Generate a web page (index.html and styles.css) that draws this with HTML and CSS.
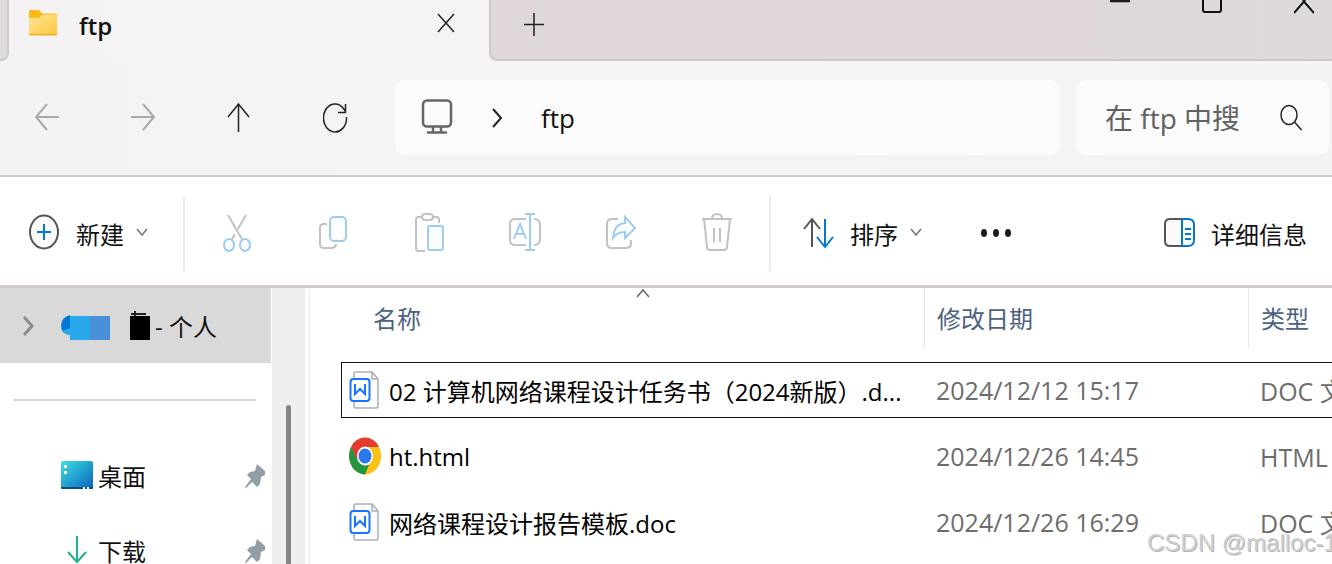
FILE: index.html
```html
<!DOCTYPE html>
<html lang="zh-CN">
<head>
  <meta charset="UTF-8" />
  <meta name="viewport" content="width=device-width, initial-scale=1.0"/>
  <title>ftp</title>
  <link rel="stylesheet" href="styles.css">
</head>
<body>

  <!-- Title bar -->
  <header class="titlebar">
    <div class="strip-left"></div>
    <div class="tab">
      <svg class="tab-icon" width="30" height="30" viewBox="0 0 30 30">
        <defs>
          <linearGradient id="folder" x1="0" y1="0" x2="1" y2="1">
            <stop offset="0" stop-color="#ffe59a"/>
            <stop offset="1" stop-color="#ffc83a"/>
          </linearGradient>
        </defs>
        <path d="M1 3q0-1 1-1h8q1.500 0 2.500 1.500L14 5.500h14q1 0 1 1V15H1z" fill="#fbb917"/>
        <path d="M1 10h9q1.500 0 3-2l1.500-1.500H29V26q0 1.500-1 1.500H2q-1 0-1-1.500z" fill="url(#folder)"/>
        <path d="M1 26.500h28" stroke="#eeb233" stroke-width="1.500"/>
      </svg>
      <span class="tab-title">ftp</span>
      <button class="icon-btn tab-close" aria-label="关闭标签页">
        <svg width="20" height="22" viewBox="0 0 20 22"><path d="M2 2l16 18M18 2L2 20" class="line"/></svg>
      </button>
    </div>
    <div class="strip">
      <button class="icon-btn new-tab" aria-label="新建标签页">
        <svg width="22" height="24" viewBox="0 0 22 24"><path d="M1 12.500h20M11 1v23" class="line"/></svg>
      </button>
      <div class="window-buttons">
        <button class="icon-btn" aria-label="最小化">
          <svg width="20" height="14" viewBox="0 0 20 14"><path d="M0 1h20" stroke="#1b1b1b" stroke-width="2.500"/></svg>
        </button>
        <button class="icon-btn" aria-label="最大化">
          <svg width="20" height="14" viewBox="0 0 20 14"><path d="M1 0v10q0 2 2 2h14q2 0 2-2V0" fill="none" stroke="#111" stroke-width="2"/></svg>
        </button>
        <button class="icon-btn" aria-label="关闭">
          <svg width="20" height="14" viewBox="0 0 20 14"><path d="M0 13L10 1.500 20 13M9 0l1 1.500L11 0" fill="none" stroke="#111" stroke-width="2"/></svg>
        </button>
      </div>
    </div>
  </header>

  <!-- Navigation and address -->
  <nav class="navbar">
    <div class="nav-buttons">
      <button class="icon-btn" aria-label="后退" disabled>
        <svg width="26" height="30" viewBox="0 0 26 30"><path d="M24 14H1M12 1L1 14l11 13" class="line muted"/></svg>
      </button>
      <button class="icon-btn" aria-label="前进" disabled>
        <svg width="26" height="30" viewBox="0 0 26 30"><path d="M0 14h23M12 1l11 13-11 13" class="line muted"/></svg>
      </button>
      <button class="icon-btn" aria-label="向上">
        <svg width="26" height="30" viewBox="0 0 26 30"><path d="M11.500 29V1M1 14L11.500 1 22 14" class="line"/></svg>
      </button>
      <button class="icon-btn" aria-label="刷新">
        <svg width="26" height="30" viewBox="0 0 26 30"><path d="M23.500 14a11.500 14 0 1 1-3-8.500l2 3M22.500 1v8.500H15" class="line"/></svg>
      </button>
    </div>
    <div class="address">
      <svg width="32" height="38" viewBox="0 0 32 38">
        <rect x="2" y="1.500" width="28" height="26" rx="4" fill="none" stroke="#666" stroke-width="2.500"/>
        <path d="M12 28v5M20 28v5M7 33.500h18" fill="none" stroke="#666" stroke-width="2.500" stroke-linecap="round"/>
      </svg>
      <svg width="12" height="22" viewBox="0 0 12 22"><path d="M1 2l8 9-8 9" fill="none" stroke="#222" stroke-width="2"/></svg>
      <a href="#">ftp</a>
    </div>
    <label class="search">
      <input type="text" placeholder="在 ftp 中搜" aria-label="在 ftp 中搜索">
      <svg width="24" height="28" viewBox="0 0 24 28">
        <ellipse cx="9" cy="11" rx="8" ry="9.500" class="line"/>
        <path d="M14.500 18l7 8" class="line"/>
      </svg>
    </label>
  </nav>

  <!-- Command bar -->
  <div class="toolbar">
    <button class="text-btn new-btn">
      <svg width="32" height="38" viewBox="0 0 32 38">
        <ellipse cx="16" cy="18" rx="14" ry="16.500" fill="#fafafa" stroke="#555" stroke-width="2"/>
        <path d="M9 18h14M16 10v16" stroke="#0078d4" stroke-width="2"/>
      </svg>
      <span>新建</span>
      <svg class="chevron" width="12" height="10" viewBox="0 0 12 10"><path d="M1 1l5 6 5-6"/></svg>
    </button>
    <div class="actions">
      <button class="icon-btn" aria-label="剪切" disabled>
        <svg width="32" height="42" viewBox="0 0 32 42">
          <path d="M7 3l15 26M25 3l-8 14M14 22l-4 7" class="gray"/>
          <ellipse cx="8" cy="33" rx="5" ry="6" class="blue"/>
          <ellipse cx="24" cy="33" rx="5" ry="6" class="blue"/>
        </svg>
      </button>
      <button class="icon-btn" aria-label="复制" disabled>
        <svg width="32" height="42" viewBox="0 0 32 42">
          <path d="M10 12H7q-4 0-4 4v16q0 4 4 4h7q5 0 5-4" class="gray"/>
          <rect x="13" y="5" width="16" height="24" rx="4" class="blue"/>
        </svg>
      </button>
      <button class="icon-btn" aria-label="粘贴" disabled>
        <svg width="32" height="42" viewBox="0 0 32 42">
          <path d="M9 5H5Q3 5 3 8v28q0 3 2 3h7M20 5h4q2 0 2 3v3" class="gray"/>
          <rect x="9" y="2" width="11" height="6" rx="3" class="gray"/>
          <rect x="15" y="14" width="15" height="24" rx="2" class="blue"/>
        </svg>
      </button>
      <button class="icon-btn" aria-label="重命名" disabled>
        <svg width="32" height="42" viewBox="0 0 32 42">
          <path d="M17 7H6q-5 0-5 5v16q0 5 5 5h11M25 7q6 0 6 6v14q0 6-6 6" class="gray"/>
          <path d="M5 27l6-15 6 15M7 22h8M21 2v36M16 2h10M16 38h10" class="blue"/>
        </svg>
      </button>
      <button class="icon-btn" aria-label="共享" disabled>
        <svg width="32" height="42" viewBox="0 0 32 42">
          <path d="M13 7H7q-5 0-5 5v19q0 5 5 5h14q5 0 5-5v-3" class="gray"/>
          <path d="M20 5l10 11-10 10v-6q-8 0-12 6Q9 12 20 11z" class="blue"/>
        </svg>
      </button>
      <button class="icon-btn" aria-label="删除" disabled>
        <svg width="32" height="42" viewBox="0 0 32 42">
          <path d="M1 7h30M11 7q0-5 5-5t5 5M3 7l3 28q0 3 3 3h14q3 0 3-3l3-28M13 16v14M19 16v14" class="gray"/>
        </svg>
      </button>
    </div>
    <button class="text-btn sort-btn">
      <svg width="32" height="32" viewBox="0 0 32 32">
        <path d="M10 30V2M2 12l8-10 8 10" fill="none" stroke="#555" stroke-width="2"/>
        <path d="M23 2v28M15 20l8 10 8-10" fill="none" stroke="#0078d4" stroke-width="2"/>
      </svg>
      <span>排序</span>
      <svg class="chevron" width="12" height="10" viewBox="0 0 12 10"><path d="M1 1l5 6 5-6"/></svg>
    </button>
    <button class="icon-btn more-btn" aria-label="更多">
      <svg width="34" height="10" viewBox="0 0 34 10">
        <g fill="#1b1b1b"><ellipse cx="4" cy="5" rx="3" ry="4"/><ellipse cx="16" cy="5" rx="3" ry="4"/><ellipse cx="28" cy="5" rx="3" ry="4"/></g>
      </svg>
    </button>
    <button class="text-btn details-btn">
      <svg width="32" height="32" viewBox="0 0 32 32">
        <path d="M19 2H7Q2 2 2 7v17q0 5 5 5h12" fill="#fafafa" stroke="#555" stroke-width="2"/>
        <path d="M19 2h6q6 0 6 6v15q0 6-6 6h-6zM22 12h6M22 17h6M22 22h6" fill="none" stroke="#0078d4" stroke-width="2"/>
      </svg>
      <span>详细信息</span>
    </button>
  </div>

  <main class="content">
    <aside class="sidebar">
      <a class="side-item account" href="#">
        <svg class="expand" width="12" height="22" viewBox="0 0 12 22"><path d="M2 2l8 9-8 9" fill="none" stroke="#8a8a8a" stroke-width="3"/></svg>
        <svg class="cloud" width="50" height="30" viewBox="0 0 50 30">
          <path d="M9 4v20Q0 23 0 14 1 6 9 4z" fill="#0078d4"/>
          <path d="M9 17v7q-5 0-8-4z" fill="#29a8ea"/>
          <rect x="9" y="5" width="20" height="24" fill="#29a8ea"/>
          <rect x="29" y="5" width="20" height="24" fill="#4a90d9"/>
        </svg>
        <svg width="22" height="34" viewBox="0 0 22 34">
          <path d="M1 5h15M5 2v6" stroke="#222" stroke-width="2"/>
          <rect x="0" y="7" width="20" height="24" fill="#000"/>
        </svg>
        <span class="account-name">- 个人</span>
      </a>
      <hr>
      <a class="side-item pinned" href="#">
        <svg width="34" height="30" viewBox="0 0 34 30">
          <defs>
            <linearGradient id="desk" x1="0" y1="0" x2="1" y2="1">
              <stop offset="0" stop-color="#3de0e4"/>
              <stop offset="1" stop-color="#0b62bd"/>
            </linearGradient>
          </defs>
          <rect x="1" y="0" width="32" height="28" rx="2" fill="url(#desk)"/>
          <path d="M1 26h32v1q0 1-1 1H2q-1 0-1-1z" fill="#0b4f80"/>
          <path d="M4 4h3v3H4zM4 10h3v3H4zM23 26h2v2h-2zM27 26h2v2h-2z" fill="#fff"/>
        </svg>
        <span>桌面</span>
        <svg class="pin" width="22" height="26" viewBox="0 0 22 26">
          <path d="M13 1l8 7v4l-4 2-1 7-3 3-5-5-6 6-1-1 6-8-4-4 3-3 5-1z" fill="#929ea6"/>
        </svg>
      </a>
      <a class="side-item pinned" href="#">
        <svg width="34" height="30" viewBox="0 0 34 30">
          <path d="M17 0v26M8 16l9 10 9-10" fill="none" stroke="#23b08c" stroke-width="2"/>
        </svg>
        <span>下载</span>
        <svg class="pin" width="22" height="26" viewBox="0 0 22 26">
          <path d="M13 1l8 7v4l-4 2-1 7-3 3-5-5-6 6-1-1 6-8-4-4 3-3 5-1z" fill="#929ea6"/>
        </svg>
      </a>
    </aside>
    <div class="scrollbar"><div class="thumb"></div></div>

    <section class="files">
      <table>
        <thead>
          <tr>
            <th class="col-name">
              <div class="head">名称
                <svg class="sort-mark" width="14" height="10" viewBox="0 0 14 10"><path d="M1 9l6-7 6 7" fill="none" stroke="#666" stroke-width="1.500"/></svg>
              </div>
            </th>
            <th class="col-date"><div class="head">修改日期</div></th>
            <th class="col-type"><div class="head">类型</div></th>
          </tr>
        </thead>
        <tbody>
          <tr class="focused">
            <td>
              <div class="cell name">
                <svg width="32" height="40" viewBox="0 0 32 40">
                  <path d="M5 8V3q0-1 2-1h16l6 7v27q0 2-2 2H7q-2 0-2-2v-4" fill="#fcfcfd" stroke="#a9afba" stroke-width="1.500"/>
                  <path d="M23 2v7h6" fill="none" stroke="#a9afba" stroke-width="1.500"/>
                  <rect x="1.500" y="9" width="19" height="22" rx="3" fill="#fff" stroke="#1a73ff" stroke-width="2"/>
                  <path d="M6 14v10l5-5 5 5V14" fill="none" stroke="#1a73ff" stroke-width="2"/>
                </svg>
                <span>02 计算机网络课程设计任务书（2024新版）.d...</span>
              </div>
            </td>
            <td><div class="cell">2024/12/12 15:17</div></td>
            <td><div class="cell">DOC 文档</div></td>
          </tr>
          <tr>
            <td>
              <div class="cell name">
                <svg width="32" height="40" viewBox="0 0 32 40">
                  <ellipse cx="16" cy="20" rx="16" ry="18.500" fill="#fbc116"/>
                  <path d="M2 11Q6 2 16 1.500 26 2 30 11H16L8 25z" fill="#e33b2e"/>
                  <path d="M2 11l7 14q3 5 11 4l-4 9.500Q2 37 0 21q0-6 2-10z" fill="#23943f"/>
                  <ellipse cx="16" cy="20" rx="8" ry="9.500" fill="#fff"/>
                  <ellipse cx="16" cy="20" rx="6.500" ry="7.500" fill="#2b76ea"/>
                </svg>
                <span>ht.html</span>
              </div>
            </td>
            <td><div class="cell">2024/12/26 14:45</div></td>
            <td><div class="cell">HTML 文档</div></td>
          </tr>
          <tr>
            <td>
              <div class="cell name">
                <svg width="32" height="40" viewBox="0 0 32 40">
                  <path d="M5 8V3q0-1 2-1h16l6 7v27q0 2-2 2H7q-2 0-2-2v-4" fill="#fcfcfd" stroke="#a9afba" stroke-width="1.500"/>
                  <path d="M23 2v7h6" fill="none" stroke="#a9afba" stroke-width="1.500"/>
                  <rect x="1.500" y="9" width="19" height="22" rx="3" fill="#fff" stroke="#1a73ff" stroke-width="2"/>
                  <path d="M6 14v10l5-5 5 5V14" fill="none" stroke="#1a73ff" stroke-width="2"/>
                </svg>
                <span>网络课程设计报告模板.doc</span>
              </div>
            </td>
            <td><div class="cell">2024/12/26 16:29</div></td>
            <td><div class="cell">DOC 文档</div></td>
          </tr>
        </tbody>
      </table>
    </section>
  </main>

  <div class="watermark">CSDN @malloc-1</div>

</body>
</html>
```
FILE: styles.css
```css
* {
  box-sizing: border-box;
}

body {
  margin: 0;
  height: 100vh;
  display: flex;
  flex-direction: column;
  position: relative;
  overflow: hidden;
  font-family: "Open Sans", "Noto Sans CJK SC", sans-serif;
  font-size: 24px;
  color: #111;
  background: #f4f2f3;
}

svg {
  display: block;
  flex-shrink: 0;
}

button {
  font: inherit;
  color: inherit;
  background: none;
  border: none;
  padding: 0;
}

a {
  color: inherit;
  text-decoration: none;
}

.icon-btn {
  display: flex;
  align-items: center;
  justify-content: center;
}

.line {
  fill: none;
  stroke: #222;
  stroke-width: 1.5;
}

.muted {
  stroke: #aaa8a9;
  stroke-width: 2;
}

/* title bar */
.titlebar {
  display: flex;
  height: 61px;
  flex-shrink: 0;
  background: linear-gradient(90deg, #f4f2f4, #f5f4f2 25%);
}

.strip-left {
  width: 9px;
  background: #ded9da;
  border: solid #d0c8ca;
  border-width: 0 2px 2px 0;
  border-radius: 0 0 8px 0;
}

.tab {
  width: 480px;
  display: flex;
  align-items: flex-start;
  padding: 8px 33px 0 19px;
}

.tab-title {
  margin-left: 21px;
  line-height: 36px;
  font-weight: 600;
}

.tab-close {
  margin: 4px 0 0 auto;
}

.strip {
  flex: 1;
  display: flex;
  justify-content: space-between;
  align-items: flex-start;
  background: linear-gradient(90deg, #e0d7d8 60%, #ddd9da);
  border: solid #d0c8ca;
  border-width: 0 0 2px 2px;
  border-radius: 0 0 0 8px;
}

.new-tab {
  margin: 12px 0 0 32px;
}

.window-buttons {
  display: flex;
  gap: 72px;
  padding-right: 18px;
}

/* navigation */
.navbar {
  display: flex;
  align-items: stretch;
  height: 116px;
  flex-shrink: 0;
  padding: 19px 3px 20px 0;
  background: linear-gradient(90deg, #f4f2f4, #f5f4f2 30%, #f5f4f2 60%, #f4f2f4);
  border-bottom: 2px solid #d2cacb;
}

.nav-buttons {
  display: flex;
  width: 395px;
}

.nav-buttons .icon-btn {
  width: 96px;
}

.address {
  flex: 1;
  display: flex;
  align-items: center;
  padding-left: 26px;
  background: #fbfbfb;
  border-radius: 10px;
  font-size: 26px;
}

.address svg + svg {
  margin-left: 39px;
}

.address a {
  margin-left: 37px;
}

.search {
  display: flex;
  align-items: center;
  width: 253px;
  margin-left: 16px;
  padding: 0 25px 0 29px;
  background: #fbfbfb;
  border-radius: 10px;
}

.search input {
  flex: 1;
  min-width: 0;
  padding: 0;
  border: none;
  outline: none;
  background: none;
  font: inherit;
  font-size: 28px;
}

.search input::placeholder {
  color: #616161;
}

/* command bar */
.toolbar {
  display: flex;
  align-items: center;
  height: 111px;
  flex-shrink: 0;
  padding-top: 4px;
  background: #fff;
  border-bottom: 3px solid #d2cacb;
}

.text-btn {
  display: flex;
  align-items: center;
  white-space: nowrap;
}

.chevron path {
  fill: none;
  stroke: #777;
  stroke-width: 1.5;
}

.new-btn {
  padding-left: 28px;
}

.text-btn span {
  margin: 0 12px 0 16px;
}

.actions {
  display: flex;
  height: 75px;
  margin-left: 35px;
  padding: 0 4px;
  border: solid #ebebeb;
  border-width: 0 2px;
}

.actions .icon-btn {
  width: 96px;
}

.gray {
  fill: none;
  stroke: #c2c2c2;
  stroke-width: 2;
}

.blue {
  fill: #fbfdff;
  stroke: #9fcdf0;
  stroke-width: 2;
}

.sort-btn {
  margin-left: 31px;
}

.more-btn {
  margin-left: 58px;
}

.details-btn {
  margin-left: auto;
  padding-right: 13px;
}

/* content */
.content {
  flex: 1;
  display: flex;
  min-height: 0;
  background: #fff;
}

.sidebar {
  width: 272px;
  flex-shrink: 0;
  overflow: hidden;
}

.side-item {
  display: flex;
  align-items: center;
  height: 75px;
  padding-right: 6px;
}

.account {
  width: 271px;
  padding-left: 22px;
  background: #d9d9d9;
}

.cloud {
  margin: 0 19px 0 27px;
}

.account-name {
  margin-left: 3px;
}

.sidebar hr {
  margin: 36px 16px 37px 13px;
  border: none;
  border-top: 2px solid #d8d8d8;
}

.pinned {
  padding-left: 60px;
}

.pinned span {
  margin-left: 4px;
}

.pin {
  margin-left: auto;
}

.scrollbar {
  width: 33px;
  flex-shrink: 0;
  padding: 117px 14px 0;
  background: #efefef;
}

.thumb {
  height: 100%;
  background: #858585;
  border-radius: 3px 3px 0 0;
}

.files {
  flex: 1;
  min-width: 0;
  overflow: hidden;
  margin-left: 3px;
  padding-left: 31px;
  border-left: 2px solid #f5f5f5;
}

table {
  width: 100%;
  table-layout: fixed;
  border-collapse: collapse;
  white-space: nowrap;
}

th,
td {
  padding: 0;
  text-align: left;
  font-weight: normal;
}

th {
  height: 69px;
  vertical-align: top;
  color: #4c6280;
}

.col-name {
  width: 583px;
}

.col-date {
  width: 324px;
}

.head {
  position: relative;
  height: 60px;
  line-height: 62px;
  padding-left: 12px;
  border-left: 1px solid #e5e5e5;
}

.col-name .head {
  padding-left: 31px;
  border-left-color: transparent;
}

.sort-mark {
  position: absolute;
  top: 0;
  left: 294px;
}

td {
  height: 66px;
  color: #6d6d6d;
}

.cell {
  display: flex;
  align-items: center;
  height: 56px;
  padding-left: 12px;
  border: solid transparent;
  border-width: 1px 0;
  font-size: 25px;
}

.cell.name {
  gap: 8px;
  padding-left: 7px;
  border-left-width: 1px;
  font-size: 24px;
  color: #000;
}

.focused .cell {
  border-color: #111;
}

.watermark {
  position: absolute;
  left: 1147px;
  bottom: 5px;
  font-family: "Liberation Sans", Arial, sans-serif;
  line-height: 32px;
  white-space: nowrap;
  color: #cfcfcf;
  text-shadow: 1px 1px 0 #b5b5b5;
}
```
